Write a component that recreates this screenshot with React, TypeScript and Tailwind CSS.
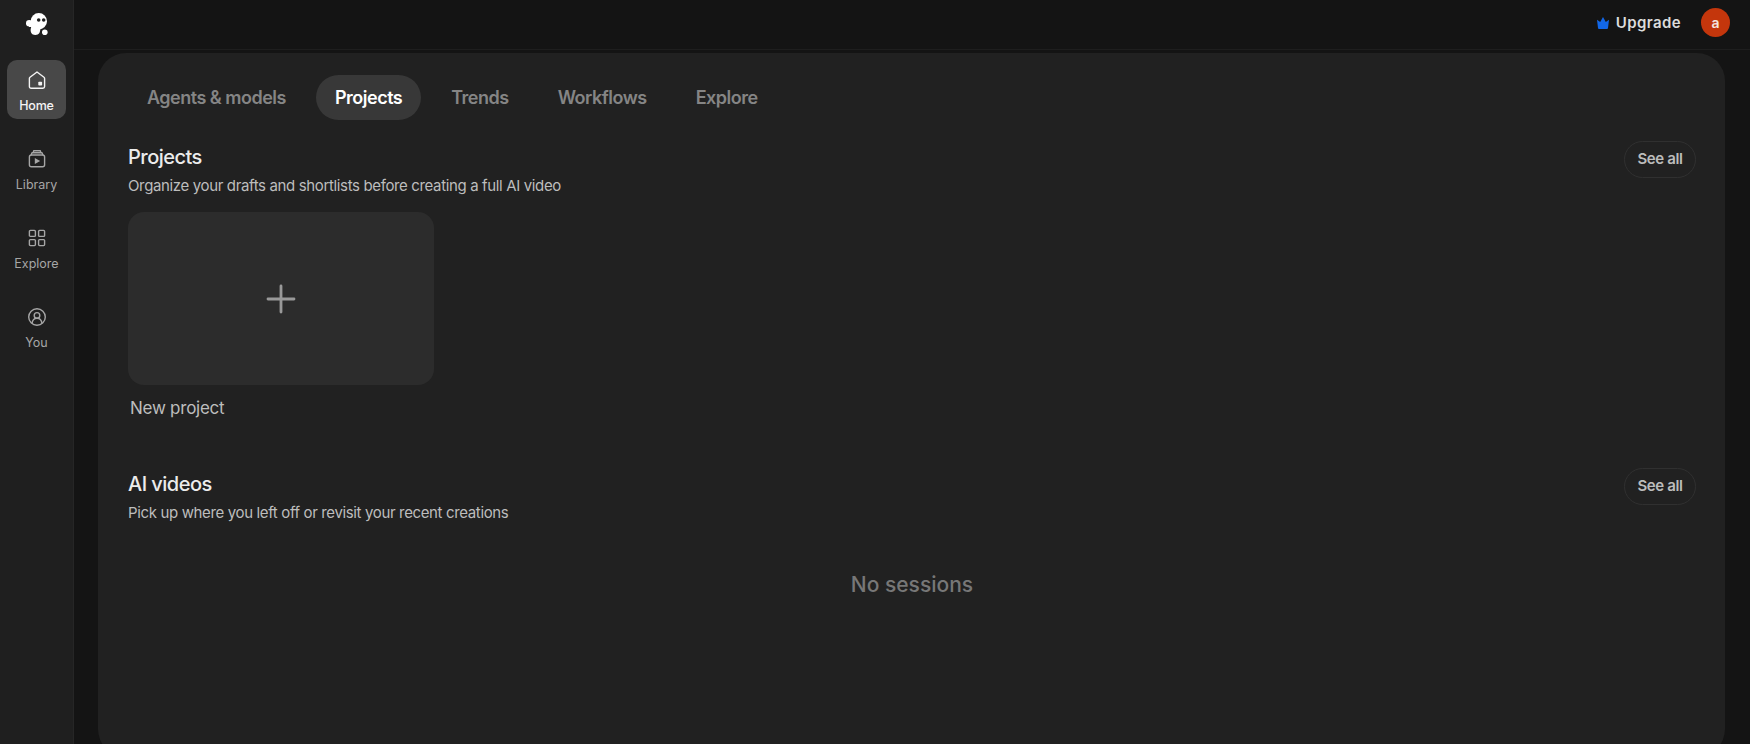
import { useState } from "react";
import type { ReactNode } from "react";

const tabs = ["Agents & models", "Projects", "Trends", "Workflows", "Explore"];

function Logo() {
  return (
    <svg className="h-6 w-6" viewBox="0 0 24 24" fill="#fff">
      <circle cx="13.8" cy="9.2" r="8.2" />
      <circle cx="4.2" cy="11.2" r="3.2" />
      <path d="M4 9h7v6H4z" />
      <path d="M6.6 13C6 16 5.4 17.3 5.7 19.2c.5 3.4 4.2 4.6 7 3.4 2.3-.9 2.2-3.4 2.8-6z" />
      <circle cx="19.8" cy="20.2" r="2.8" />
      <circle cx="13.7" cy="8" r="1.8" fill="#1f1f1f" />
      <circle cx="18.7" cy="8" r="1.8" fill="#1f1f1f" />
    </svg>
  );
}

function HomeIcon() {
  return (
    <svg className="h-5 w-5" viewBox="0 0 20 20" fill="none" stroke="currentColor" strokeWidth={1.4} strokeLinejoin="round">
      <path d="M10 2 3 7.3a1.6 1.6 0 0 0-.6 1.3v7.9a1.7 1.7 0 0 0 1.7 1.7h11.800a1.7 1.7 0 0 0 1.7-1.7V8.6c0-.5-.2-1-.6-1.3z" />
      <rect x="11.3" y="11.7" width="3.8" height="3.8" rx="0.8" fill="currentColor" stroke="none" />
    </svg>
  );
}

function LibraryIcon() {
  return (
    <svg className="h-5 w-5" viewBox="0 0 20 20" fill="none" stroke="currentColor" strokeWidth={1.4} strokeLinecap="round" strokeLinejoin="round">
      <rect x="2.4" y="6" width="15.2" height="11.8" rx="2" />
      <path d="M4.2 5.8 5 3.8h10l.8 2M6.2 3.6l.5-1.9h6.6l.5 1.9" />
      <path d="M7.8 9v6l5.4-3z" fill="currentColor" stroke="none" />
    </svg>
  );
}

function GridIcon() {
  return (
    <svg className="h-5 w-5" viewBox="0 0 20 20" fill="none" stroke="currentColor" strokeWidth={1.4}>
      <rect x="2.4" y="2.4" width="6" height="6" rx="1" />
      <rect x="11.6" y="2.4" width="6" height="6" rx="1" />
      <rect x="2.4" y="11.6" width="6" height="6" rx="1" />
      <rect x="11.6" y="11.6" width="6" height="6" rx="1" />
    </svg>
  );
}

function UserIcon() {
  return (
    <svg className="h-5 w-5" viewBox="0 0 20 20" fill="none" stroke="currentColor" strokeWidth={1.4}>
      <circle cx="10" cy="10" r="8.3" />
      <circle cx="10" cy="8.4" r="2.8" />
      <path d="M5 16.3c.5-3.2 2.4-5 5-5s4.500 1.8 5 5" />
    </svg>
  );
}

function NavItem({ icon, label, active }: { icon: ReactNode; label: string; active?: boolean }) {
  return (
    <button
      className={`flex h-[59px] w-[59px] flex-col items-center gap-2 rounded-[10px] pt-[10px] text-[12.5px] leading-4 ${
        active ? "bg-[#484848] font-medium tracking-[-0.2px] text-[#f4f4f4]" : "text-[#a6a6a6]"
      }`}
    >
      {icon}
      <span>{label}</span>
    </button>
  );
}

function SectionHeader({ title, subtitle }: { title: string; subtitle: string }) {
  return (
    <div className="flex items-start justify-between">
      <div className="pt-px">
        <h2 className="text-[20px] leading-[30px] font-medium tracking-[-0.53px] text-[#ececec]">{title}</h2>
        <p className="text-[15px] leading-7 tracking-[-0.36px] text-[#bdbdbd]">{subtitle}</p>
      </div>
      <button className="h-[37px] w-[72px] rounded-full border border-[#303030] text-[15px] font-semibold tracking-[-0.4px] text-[#bcbcbc]">
        See all
      </button>
    </div>
  );
}

export default function App() {
  const [activeTab, setActiveTab] = useState("Projects");

  return (
    <div className="flex h-[744px] w-full overflow-hidden bg-[#141414] font-['Inter',sans-serif]">
      <aside className="flex w-[74px] shrink-0 flex-col items-center border-r border-[#262626] bg-[#1f1f1f] pt-3">
        <Logo />
        <nav className="mt-6 flex flex-col gap-5">
          <NavItem icon={<HomeIcon />} label="Home" active />
          <NavItem icon={<LibraryIcon />} label="Library" />
          <NavItem icon={<GridIcon />} label="Explore" />
          <NavItem icon={<UserIcon />} label="You" />
        </nav>
      </aside>

      <div className="flex min-w-0 flex-1 flex-col">
        <header className="flex h-[50px] shrink-0 items-center justify-end border-b border-[#1e1e1e] pr-5 pb-1">
          <button className="flex items-center gap-[7px] pt-px text-[15px] font-semibold tracking-[0.4px] text-[#dcdcdc]">
            <svg className="h-3 w-3" viewBox="0 0 12 12" fill="#1267e8">
              <path d="M0 2.8 3.2 5 6 0l2.8 5L12 2.8 11 11a1 1 0 0 1-1 .9H2A1 1 0 0 1 1 11z" />
            </svg>
            Upgrade
          </button>
          <div className="ml-5 flex h-[29px] w-[29px] items-center justify-center rounded-full bg-[#c4360c] pb-px text-[14px] font-semibold text-[#f3e5df]">
            a
          </div>
        </header>

        {/* panel runs past the bottom of the window */}
        <main className="mt-[3px] mr-[25px] ml-6 h-[704px] shrink-0 rounded-[28px] bg-[#212121] pt-[22px] pr-[29px] pl-[30px]">
          <div className="flex gap-[11px]">
            {tabs.map((tab) => (
              <button
                key={tab}
                onClick={() => setActiveTab(tab)}
                className={`h-[45px] rounded-full px-[19px] pb-px text-[18px] font-semibold tracking-[-0.5px] ${
                  tab === activeTab ? "bg-[#383838] text-white" : "text-[#858585]"
                }`}
              >
                {tab}
              </button>
            ))}
          </div>

          <section className="mt-[21px] h-[327px]">
            <SectionHeader title="Projects" subtitle="Organize your drafts and shortlists before creating a full AI video" />
            <button className="mt-3 flex h-[173px] w-[306px] items-center justify-center rounded-2xl bg-[#2c2c2c]">
              <svg className="h-[30px] w-[30px]" viewBox="0 0 30 30" fill="none" stroke="#999" strokeWidth={2.8} strokeLinecap="round">
                <path d="M15 2v26M2 15h26" />
              </svg>
            </button>
            <p className="mt-[10px] pl-[2px] text-[17px] leading-[26px] tracking-[-0.25px] text-[#bdbdbd]">New project</p>
          </section>

          <section>
            <SectionHeader title="AI videos" subtitle="Pick up where you left off or revisit your recent creations" />
            <p className="mt-[43px] text-center text-[21px] leading-[30px] font-medium text-[#777]">No sessions</p>
          </section>
        </main>
      </div>
    </div>
  );
}
